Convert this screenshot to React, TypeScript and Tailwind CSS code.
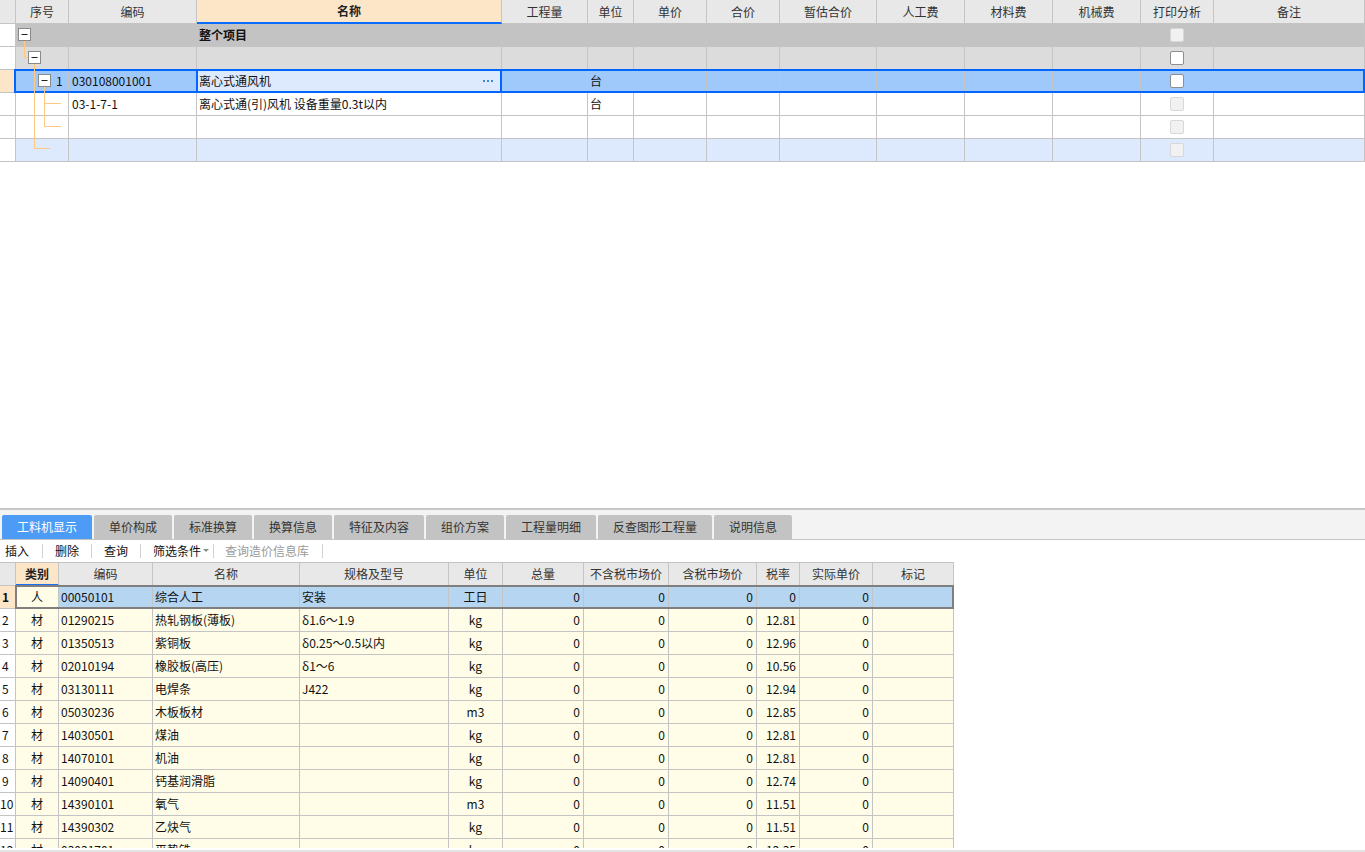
import React from "react";

const FONT = "font-['Noto_Sans_CJK_SC','Noto_Sans',sans-serif]";
const TOP_COLS =
  "grid grid-cols-[16px_53px_128px_305px_86px_46px_73px_73px_97px_88px_88px_88px_73px_151px]";
const BOT_COLS =
  "grid grid-cols-[16px_43px_94px_147px_149px_54px_81px_85px_88px_43px_73px_81px]";

const cellBase =
  "h-[23px] border-r border-b border-[#c4c4c4] flex items-center text-[12px] whitespace-nowrap overflow-hidden";

function Check({ on }: { on: boolean }) {
  return (
    <div
      className={
        on
          ? "w-[14px] h-[14px] rounded-[2px] border border-[#8e8e8e] bg-white"
          : "w-[14px] h-[14px] rounded-[2px] border border-[#d8d8d8] bg-[#f1f1f1]"
      }
    />
  );
}

const topHeaders = [
  "",
  "序号",
  "编码",
  "名称",
  "工程量",
  "单位",
  "单价",
  "合价",
  "暂估合价",
  "人工费",
  "材料费",
  "机械费",
  "打印分析",
  "备注",
];

type TopRowDef = {
  bg: string;
  ind: string;
  seq?: string;
  code?: string;
  name?: string;
  bold?: boolean;
  unit?: string;
  check: boolean;
  selected?: boolean;
};

const topRows: TopRowDef[] = [
  { bg: "bg-[#c3c3c3]", ind: "bg-white", name: "整个项目", bold: true, check: false },
  { bg: "bg-[#dcdcdc]", ind: "bg-white", check: true },
  {
    bg: "bg-[#9fc8fb]",
    ind: "bg-[#fde6c8]",
    seq: "1",
    code: "030108001001",
    name: "离心式通风机",
    unit: "台",
    check: true,
    selected: true,
  },
  {
    bg: "bg-white",
    ind: "bg-white",
    code: "03-1-7-1",
    name: "离心式通(引)风机 设备重量0.3t以内",
    unit: "台",
    check: false,
  },
  { bg: "bg-white", ind: "bg-white", check: false },
  { bg: "bg-[#dde9fc]", ind: "bg-white", check: false },
];

function TopTable() {
  return (
    <div className="relative w-[1365px]">
      <div className={TOP_COLS}>
        {topHeaders.map((h, i) => (
          <div
            key={i}
            className={
              i === 3
                ? "h-[24px] border-r border-[#c4c4c4] border-b-2 border-b-[#0a6cff] bg-[#fde6c8] flex items-center justify-center text-[12px] font-bold text-[#222]"
                : "h-[24px] border-r border-b border-[#c4c4c4] bg-[#e8e8e8] flex items-center justify-center text-[12px] text-[#333]"
            }
          >
            {h}
          </div>
        ))}
      </div>
      {topRows.map((r, ri) => (
        <div key={ri} className={"relative " + TOP_COLS}>
          <div className={cellBase + " " + r.ind} />
          <div className={cellBase + " " + r.bg + " pl-[40px] text-[#111]"}>{r.seq}</div>
          <div className={cellBase + " " + r.bg + " pl-[3px] text-[#111]"}>{r.code}</div>
          <div
            className={
              cellBase +
              " " +
              (r.selected ? "bg-[#dde9fc]" : r.bg) +
              " pl-[2px] pr-[8px] justify-between text-[#111]" +
              (r.bold ? " font-bold" : "")
            }
          >
            <span>{r.name}</span>
            {r.selected && (
              <span className="flex gap-[2px] items-center">
                <span className="w-[2px] h-[2px] bg-[#3f87d8]" />
                <span className="w-[2px] h-[2px] bg-[#3f87d8]" />
                <span className="w-[2px] h-[2px] bg-[#3f87d8]" />
              </span>
            )}
          </div>
          <div className={cellBase + " " + r.bg} />
          <div className={cellBase + " " + r.bg + " pl-[2px] text-[#111]"}>{r.unit}</div>
          <div className={cellBase + " " + r.bg} />
          <div className={cellBase + " " + r.bg} />
          <div className={cellBase + " " + r.bg} />
          <div className={cellBase + " " + r.bg} />
          <div className={cellBase + " " + r.bg} />
          <div className={cellBase + " " + r.bg} />
          <div className={cellBase + " " + r.bg + " justify-center"}>
            <Check on={r.check} />
          </div>
          <div className={cellBase + " " + r.bg} />
          {r.selected && (
            <>
              <div className="absolute left-[14px] right-0 -top-[1px] h-[24px] border-2 border-[#0066ff] pointer-events-none" />
              <div className="absolute left-[196px] w-[306px] -top-[1px] h-[24px] border-2 border-[#0066ff] pointer-events-none" />
            </>
          )}
        </div>
      ))}
      <svg
        className="absolute left-0 top-0 pointer-events-none"
        width="70"
        height="162"
        viewBox="0 0 70 162"
      >
        <g stroke="#ffc97f" strokeWidth="1" fill="none">
          <path d="M24.5 40 V57.5 H29" />
          <path d="M34.5 64 V148.5 H50" />
          <path d="M44.5 87 V126.5 H61" />
          <path d="M44.5 103.5 H61" />
        </g>
        {[
          [18.5, 28.5],
          [28.5, 51.5],
          [38.5, 74.5],
        ].map(([x, y], i) => (
          <g key={i}>
            <rect x={x} y={y} width="12" height="12" fill="#fff" stroke="#8a8a8a" />
            <path d={`M${x + 3} ${y + 6} H${x + 9}`} stroke="#222" strokeWidth="1" />
          </g>
        ))}
      </svg>
    </div>
  );
}

const tabs = [
  ["工料机显示", "w-[90px]"],
  ["单价构成", "w-[78px]"],
  ["标准换算", "w-[78px]"],
  ["换算信息", "w-[78px]"],
  ["特征及内容", "w-[90px]"],
  ["组价方案", "w-[78px]"],
  ["工程量明细", "w-[90px]"],
  ["反查图形工程量", "w-[114px]"],
  ["说明信息", "w-[78px]"],
];

function TabBar() {
  return (
    <div className="h-[30px] bg-[#f3f3f3] border-b border-[#c4c4c4] flex items-end pl-[2px] gap-[2px]">
      {tabs.map(([t, w], i) => (
        <div
          key={i}
          className={
            w +
            " h-[24px] rounded-t-[2px] flex items-center justify-center text-[12px] " +
            (i === 0 ? "bg-[#4c9cf6] text-white" : "bg-[#c3c3c3] text-[#333]")
          }
        >
          {t}
        </div>
      ))}
    </div>
  );
}

function Sep({ ml }: { ml: string }) {
  return <span className={"w-px h-[14px] bg-[#d2d2d2] " + ml} />;
}

function Toolbar() {
  return (
    <div className="h-[22px] flex items-center text-[12px] text-[#111]">
      <span className="ml-[5px]">插入</span>
      <Sep ml="ml-[13px]" />
      <span className="ml-[12px]">删除</span>
      <Sep ml="ml-[12px]" />
      <span className="ml-[12px]">查询</span>
      <Sep ml="ml-[12px]" />
      <span className="ml-[12px]">筛选条件</span>
      <svg className="ml-[2px]" width="6" height="4" viewBox="0 0 6 4">
        <path d="M0 0 H6 L3 3 Z" fill="#8a8a8a" />
      </svg>
      <Sep ml="ml-[4px]" />
      <span className="ml-[11px] text-[#9a9a9a]">查询造价信息库</span>
      <Sep ml="ml-[13px]" />
    </div>
  );
}

const botHeaders = [
  "",
  "类别",
  "编码",
  "名称",
  "规格及型号",
  "单位",
  "总量",
  "不含税市场价",
  "含税市场价",
  "税率",
  "实际单价",
  "标记",
];

const botRows = [
  ["人", "00050101", "综合人工", "安装", "工日", "0", "0", "0", "0", "0"],
  ["材", "01290215", "热轧钢板(薄板)", "δ1.6～1.9", "kg", "0", "0", "0", "12.81", "0"],
  ["材", "01350513", "紫铜板", "δ0.25～0.5以内", "kg", "0", "0", "0", "12.96", "0"],
  ["材", "02010194", "橡胶板(高压)", "δ1～6", "kg", "0", "0", "0", "10.56", "0"],
  ["材", "03130111", "电焊条", "J422", "kg", "0", "0", "0", "12.94", "0"],
  ["材", "05030236", "木板板材", "", "m3", "0", "0", "0", "12.85", "0"],
  ["材", "14030501", "煤油", "", "kg", "0", "0", "0", "12.81", "0"],
  ["材", "14070101", "机油", "", "kg", "0", "0", "0", "12.81", "0"],
  ["材", "14090401", "钙基润滑脂", "", "kg", "0", "0", "0", "12.74", "0"],
  ["材", "14390101", "氧气", "", "m3", "0", "0", "0", "11.51", "0"],
  ["材", "14390302", "乙炔气", "", "kg", "0", "0", "0", "11.51", "0"],
  ["材", "03031701", "平垫铁", "", "kg", "0", "0", "0", "12.35", "0"],
];

function BottomTable() {
  return (
    <div className="h-[286px] overflow-hidden">
      <div className="w-[954px] border-t border-[#c4c4c4]">
        <div className={BOT_COLS}>
          {botHeaders.map((h, i) => (
            <div
              key={i}
              className={
                i === 1
                  ? "h-[23px] border-r border-[#c4c4c4] border-b-2 border-b-[#1a6ef5] bg-[#fde6c8] flex items-center justify-center text-[12px] font-bold text-[#222]"
                  : "h-[23px] border-r border-b border-[#c4c4c4] bg-[#e8e8e8] flex items-center justify-center text-[12px] text-[#333]"
              }
            >
              {h}
            </div>
          ))}
        </div>
        {botRows.map((r, ri) => {
          const sel = ri === 0;
          const bg = sel ? "bg-[#b5d5f0]" : "bg-[#fffde8]";
          return (
            <div key={ri} className={"relative " + BOT_COLS}>
              <div
                className={
                  cellBase +
                  " text-[#111] " +
                  (sel ? "bg-[#fde6c8] font-bold pl-[2px]" : "bg-white " + (ri >= 9 ? "pl-0" : "pl-[2px]"))
                }
              >
                {ri + 1}
              </div>
              <div className={cellBase + " bg-[#fffde8] justify-center text-[#111]"}>{r[0]}</div>
              <div className={cellBase + " " + bg + " pl-[2px] text-[#111]"}>{r[1]}</div>
              <div className={cellBase + " " + bg + " pl-[2px] text-[#111]"}>{r[2]}</div>
              <div className={cellBase + " " + bg + " pl-[2px] text-[#111]"}>{r[3]}</div>
              <div className={cellBase + " " + bg + " justify-center text-[#111]"}>{r[4]}</div>
              <div className={cellBase + " " + bg + " justify-end pr-[3px] text-[#111]"}>{r[5]}</div>
              <div className={cellBase + " " + bg + " justify-end pr-[3px] text-[#111]"}>{r[6]}</div>
              <div className={cellBase + " " + bg + " justify-end pr-[3px] text-[#111]"}>{r[7]}</div>
              <div className={cellBase + " " + bg + " justify-end pr-[3px] text-[#111]"}>{r[8]}</div>
              <div className={cellBase + " " + bg + " justify-end pr-[3px] text-[#111]"}>{r[9]}</div>
              <div className={cellBase + " " + bg} />
              {sel && (
                <div className="absolute left-[15px] right-0 -top-[1px] h-[24px] border-2 border-[#7f7f7f] pointer-events-none" />
              )}
            </div>
          );
        })}
      </div>
    </div>
  );
}

export default function App() {
  return (
    <div className={"w-[1365px] h-[852px] overflow-hidden bg-white flex flex-col " + FONT}>
      <div className="h-[508px] shrink-0 overflow-hidden">
        <TopTable />
      </div>
      <div className="h-[2px] shrink-0 bg-[#c6c6c6]" />
      <TabBar />
      <Toolbar />
      <BottomTable />
      <div className="h-[2px] shrink-0 bg-white" />
      <div className="h-[2px] shrink-0 bg-[#e3e3e3]" />
    </div>
  );
}
